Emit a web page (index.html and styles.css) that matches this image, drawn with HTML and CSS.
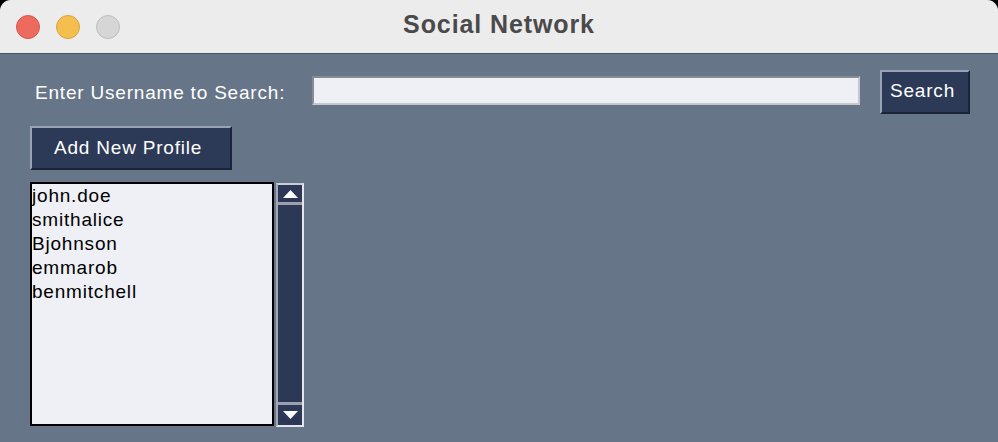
FILE: index.html
```html
<!DOCTYPE html>
<html>
<head>
<meta charset="utf-8">
<title>Social Network</title>
<link rel="stylesheet" href="styles.css">
</head>
<body>
<div class="window">
  <div class="titlebar">
    <div class="lights">
      <span class="light red"></span>
      <span class="light yellow"></span>
      <span class="light gray"></span>
    </div>
    <div class="title">Social Network</div>
  </div>
  <div class="content">
    <div class="search-row">
      <label class="label">Enter Username to Search:</label>
      <div class="entry"></div>
      <button class="btn btn-search">Search</button>
    </div>
    <div class="add-row">
      <button class="btn btn-add">Add New Profile</button>
    </div>
    <div class="list-row">
      <div class="listbox">
        <div class="item">john.doe</div>
        <div class="item">smithalice</div>
        <div class="item">Bjohnson</div>
        <div class="item">emmarob</div>
        <div class="item">benmitchell</div>
      </div>
      <div class="scrollbar">
        <div class="arrow up"><svg width="15" height="8" viewBox="0 0 15 8"><polygon points="7.5,0 15,8 0,8" fill="#fff"/></svg></div>
        <div class="trough"></div>
        <div class="arrow down"><svg width="15" height="8" viewBox="0 0 15 8"><polygon points="0,0 15,0 7.5,8" fill="#fff"/></svg></div>
      </div>
    </div>
  </div>
</div>
</body>
</html>
```
FILE: styles.css
```css
html, body {
  margin: 0;
  padding: 0;
  background: #000;
}
.window {
  width: 998px;
  height: 442px;
  border-radius: 11px 11px 0 0;
  overflow: hidden;
  display: flex;
  flex-direction: column;
  font-family: "Liberation Sans", Arial, sans-serif;
  background: #677589;
}
.titlebar {
  height: 53px;
  background: #ececec;
  border-bottom: 1px solid #4a5468;
  display: flex;
  align-items: center;
  position: relative;
  flex-shrink: 0;
}
.lights {
  display: flex;
  gap: 16px;
  padding-left: 16px;
  margin-top: 1px;
}
.light {
  width: 24px;
  height: 24px;
  border-radius: 50%;
  box-sizing: border-box;
}
.red { background: #ec6a5e; border: 1px solid #d8574b; }
.yellow { background: #f4bf4f; border: 1px solid #dba43a; }
.gray { background: #d6d6d6; border: 1px solid #bdbdbd; }
.title {
  position: absolute;
  left: 0;
  right: 0;
  top: 0;
  height: 53px;
  line-height: 48px;
  text-align: center;
  font-weight: bold;
  font-size: 25px;
  letter-spacing: 0.9px;
  color: #4a4a4a;
}
.content {
  flex: 1;
  padding: 16px 28px 16px 30px;
  display: flex;
  flex-direction: column;
  gap: 12px;
  font-size: 19px;
  letter-spacing: 0.8px;
}
.search-row {
  display: flex;
  align-items: flex-start;
  height: 44px;
}
.label {
  color: #fff;
  margin-left: 5px;
  margin-top: 12px;
  width: 252px;
  white-space: nowrap;
}
.entry {
  margin-left: 25px;
  margin-top: 6px;
  width: 544px;
  height: 25px;
  background: #eef0f5;
  border-top: 2px solid #878c94;
  border-left: 2px solid #878c94;
  border-bottom: 2px solid #c5c9cf;
  border-right: 2px solid #c5c9cf;
}
.btn {
  font-family: inherit;
  font-size: 19px;
  letter-spacing: 0.8px;
  color: #fff;
  background: #2c3a58;
  border-top: 2px solid #9aa3b3;
  border-left: 2px solid #9aa3b3;
  border-bottom: 2px solid #1c2538;
  border-right: 2px solid #1c2538;
  height: 44px;
  padding: 0;
  box-sizing: border-box;
}
.btn-search {
  margin-left: 20px;
  width: 90px;
  text-align: left;
  padding-left: 8px;
  padding-bottom: 3px;
}
.btn-add {
  width: 202px;
  text-align: left;
  padding-left: 22px;
}
.list-row {
  display: flex;
  align-items: flex-start;
}
.listbox {
  width: 240px;
  height: 240px;
  border: 2px solid #000;
  background: #eef0f5;
  color: #000;
  line-height: 24px;
}
.item {
  padding-left: 0;
  white-space: nowrap;
}
.scrollbar {
  margin-left: 2px;
  margin-top: 1px;
  width: 24px;
  height: 240px;
  border-top: 2px solid #c9ced6;
  border-left: 2px solid #a3aab6;
  border-right: 2px solid #e3e6eb;
  border-bottom: 2px solid #e3e6eb;
  background: #9aa1ad;
  display: flex;
  flex-direction: column;
  gap: 3px;
}
.arrow {
  height: 17px;
  background: #2c3856;
  display: flex;
  align-items: center;
  justify-content: center;
  flex-shrink: 0;
}
.arrow.down {
  height: 20px;
}
.trough {
  flex: 1;
  background: #2c3856;
}
```
